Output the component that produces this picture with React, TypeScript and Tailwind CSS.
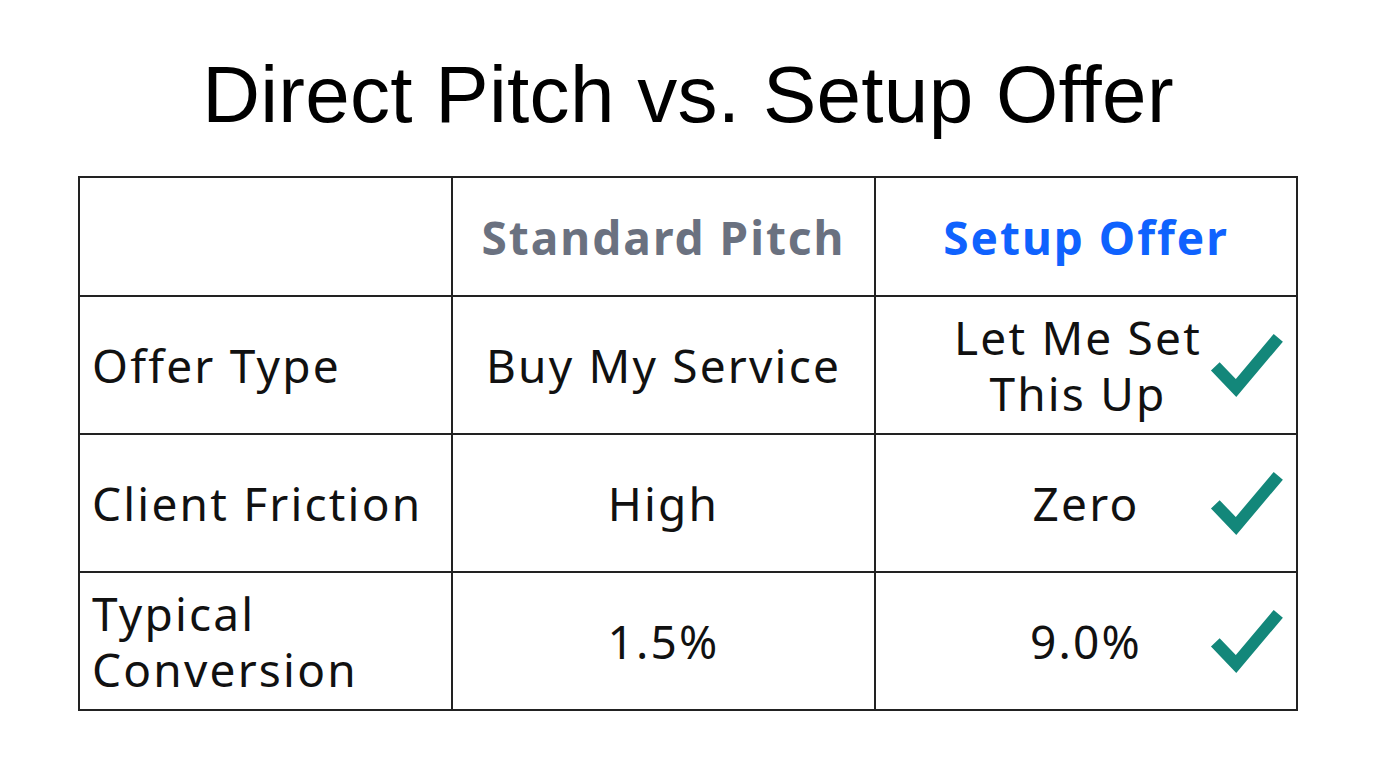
import React from 'react';

const Check: React.FC = () => (
  <svg
    className="absolute right-[12px] top-1/2 -translate-y-1/2"
    width="76"
    height="68"
    viewBox="0 0 76 68"
    fill="none"
  >
    <polyline
      points="7.3,35.3 28,57 70.3,6.8"
      stroke="#13877a"
      strokeWidth="12"
      strokeLinecap="butt"
      strokeLinejoin="miter"
    />
  </svg>
);

const bodyFont = "font-['Noto_Sans',sans-serif]";

export default function App() {
  return (
    <div className="w-[1376px] h-[768px] bg-white pt-[55px]">
      <h1 className="h-[80px] text-center text-[80px] leading-none tracking-[0.3px] text-black font-['Liberation_Sans',Arial,sans-serif]">
        Direct Pitch vs. Setup Offer
      </h1>

      <div
        className={`mt-[41px] mx-auto w-[1220px] grid grid-cols-[371px_421px_420px] grid-rows-[117px_136px_136px_136px] gap-[2px] p-[2px] bg-[#222] text-[46px] leading-[56px] tracking-[2.2px] text-[#111] ${bodyFont}`}
      >
        {/* header */}
        <div className="bg-white" />
        <div className="bg-white flex items-center justify-center font-bold tracking-[2px] text-[#6a7180]">
          Standard Pitch
        </div>
        <div className="bg-white flex items-center justify-center font-bold tracking-[2px] text-[#0f62fe]">
          Setup Offer
        </div>

        {/* offer type */}
        <div className="bg-white flex items-center pl-[12px]">Offer Type</div>
        <div className="bg-white flex items-center justify-center">Buy My Service</div>
        <div className="bg-white relative flex items-center justify-center text-center">
          <span className="-translate-x-[8px]">
            Let Me Set
            <br />
            This Up
          </span>
          <Check />
        </div>

        {/* friction */}
        <div className="bg-white flex items-center pl-[12px]">Client Friction</div>
        <div className="bg-white flex items-center justify-center">High</div>
        <div className="bg-white relative flex items-center justify-center">
          Zero
          <Check />
        </div>

        {/* conversion */}
        <div className="bg-white flex items-center pl-[12px]">
          <span>
            Typical
            <br />
            Conversion
          </span>
        </div>
        <div className="bg-white flex items-center justify-center">1.5%</div>
        <div className="bg-white relative flex items-center justify-center">
          9.0%
          <Check />
        </div>
      </div>
    </div>
  );
}
